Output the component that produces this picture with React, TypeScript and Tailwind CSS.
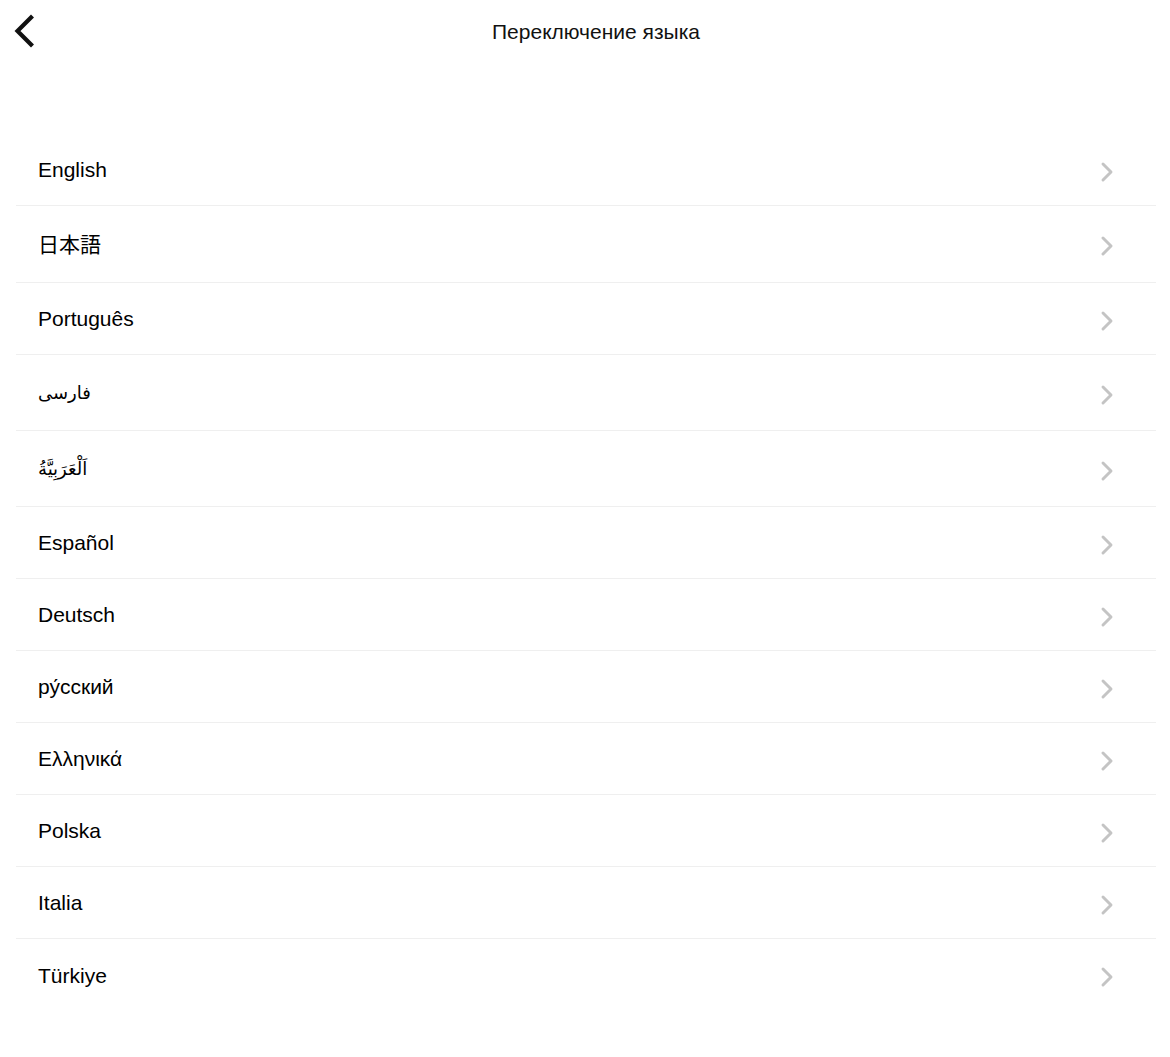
import { ChevronRight } from 'lucide-react';

const LANGS = [
  { label: 'English', h: 'h-[72px]' },
  { label: '日本語', h: 'h-[77px]' },
  { label: 'Português', h: 'h-[72px]' },
  { label: 'فارسی', h: 'h-[76px]', rtl: true },
  { label: 'اَلْعَرَبِيَّةُ', h: 'h-[76px]', rtl: true },
  { label: 'Español', h: 'h-[72px]' },
  { label: 'Deutsch', h: 'h-[72px]' },
  { label: 'ру́сский', h: 'h-[72px]' },
  { label: 'Ελληνικά', h: 'h-[72px]' },
  { label: 'Polska', h: 'h-[72px]' },
  { label: 'Italia', h: 'h-[72px]' },
  { label: 'Türkiye', h: 'h-[72px]' },
];

function BackArrow() {
  return (
    <svg width="24" height="34" viewBox="0 0 24 34" fill="none">
      <path d="M19 3.5 L5.5 17 L19 30.5" stroke="#111" strokeWidth="4.2" strokeLinecap="square" />
    </svg>
  );
}

export default function App() {
  return (
    <div className="min-h-[1057px] w-full bg-white font-['Liberation_Sans','Noto_Sans_CJK_JP','DejaVu_Sans',sans-serif] text-black">
      <header className="relative flex h-[64px] items-center justify-center pl-[22px]">
        <button className="absolute left-[12px] top-[14px]">
          <BackArrow />
        </button>
        <h1 className="text-[21px] text-[#111]">Переключение языка</h1>
      </header>

      <ul className="mt-[70px] pl-4 pr-[14px]">
        {LANGS.map((lang, i) => (
          <li
            key={lang.label}
            className={`flex ${lang.h} items-center justify-between pl-[22px] pr-[33px] ${
              i < LANGS.length - 1 ? 'border-b border-[#efefef]' : ''
            }`}
          >
            <span className={lang.rtl ? 'text-[18px] leading-none' : 'text-[21px] leading-none'}>{lang.label}</span>
            <ChevronRight className="h-[32px] w-[32px] translate-y-[2px] text-[#c4c4c4]" strokeWidth={2.2} />
          </li>
        ))}
      </ul>
    </div>
  );
}
